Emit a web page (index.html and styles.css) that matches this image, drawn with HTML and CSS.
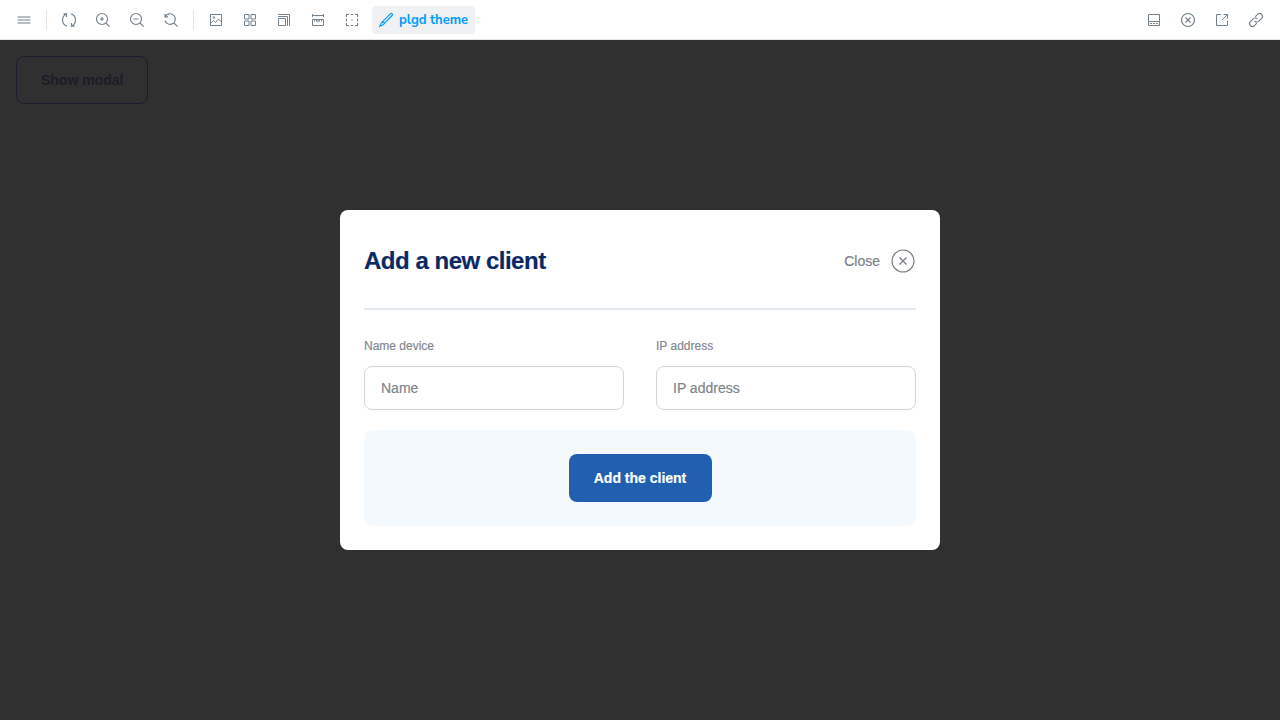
FILE: index.html
```
<!DOCTYPE html>
<html lang="en">
<head>
<meta charset="utf-8">
<title>plgd theme</title>
<link rel="stylesheet" href="styles.css">
</head>
<body>
<div class="app">
  <header class="toolbar">
    <div class="group">
      <button class="tool" aria-label="Menu"><svg viewBox="0 0 14 14"><path d="M.5 4h13M.5 7h13M.5 10h13"/></svg></button>
      <span class="separator"></span>
      <button class="tool" aria-label="Reload"><svg viewBox="0 0 14 14" class="bold"><path d="M1.500.9h3v3M4.300 1.100A6.500 6.500 0 0 0 4.800 13.100M12.500 13.100h-3v-3M9.700 12.900A6.500 6.500 0 0 0 9.200.9"/></svg></button>
      <button class="tool" aria-label="Zoom in"><svg viewBox="0 0 14 14" class="bold"><circle cx="6" cy="6" r="5.500"/><path d="M10 10l3.600 3.600M6 4v4M4 6h4"/></svg></button>
      <button class="tool" aria-label="Zoom out"><svg viewBox="0 0 14 14" class="bold"><circle cx="6" cy="6" r="5.500"/><path d="M10 10l3.600 3.600M3.500 6h5"/></svg></button>
      <button class="tool" aria-label="Reset zoom"><svg viewBox="0 0 14 14" class="bold"><path d="M1 1v2.900h3M1.300 3.600A5.300 5.300 0 1 1 1 7.800M10 10l3.600 3.600"/></svg></button>
      <span class="separator"></span>
      <button class="tool" aria-label="Background"><svg viewBox="0 0 14 14"><path d="M1.500 1.500h11v11h-11zM1.500 10.500l3-3 2 2 3-3.500 3 3"/><circle cx="5" cy="4.500" r=".8"/></svg></button>
      <button class="tool" aria-label="Grid"><svg viewBox="0 0 14 14"><path d="M1.500 1.500H6V6H1.500zM8 1.500h4.500V6H8zM1.500 8H6v4.500H1.500zM8 8h4.500v4.500H8z"/></svg></button>
      <button class="tool" aria-label="Viewport"><svg viewBox="0 0 14 14"><path d="M1.500 5.500h7v7h-7zM1 3.500h9.500V13M1 1.500h11.500V13"/></svg></button>
      <button class="tool" aria-label="Measure"><svg viewBox="0 0 14 14"><path d="M1.500 1v3M12.500 1v3M1.500 2.500h11M1.500 6.500h11v6h-11zM3.500 6.500v2M5.500 6.500v2M7 6.500v3M8.500 6.500v2M10.500 6.500v2"/></svg></button>
      <button class="tool" aria-label="Outline"><svg viewBox="0 0 14 14" class="bold"><path d="M1.500 4V1.500H4M5.500 1.500h3M10 1.500h2.500V4M12.500 5.500v3M12.500 10v2.500H10M8.500 12.500h-3M4 12.500H1.500V10M1.500 8.500v-3M6.200 7h1.600"/></svg></button>
      <button class="tool theme"><svg viewBox="0 0 14 14" class="bold"><path d="M13.200.8c-.5-.5-1.200-.4-1.700.1L3.700 8.400l1.900 1.900 7.500-7.800c.5-.5.6-1.200.1-1.700zM3.700 8.400L2.200 10.200.8 13.200l3-1.200 1.800-1.700"/></svg><span class="theme-name">plgd theme</span></button>
    </div>
    <div class="group">
      <button class="tool" aria-label="Addons"><svg viewBox="0 0 14 14"><path d="M1.500 1.500h11v11h-11zM1.500 8.500h11M3 10.500h2M6 10.500h2M9 10.500h2"/></svg></button>
      <button class="tool" aria-label="Hide"><svg viewBox="0 0 14 14" class="bold"><circle cx="7" cy="7" r="6.500"/><path d="M4.500 4.500l5 5M9.500 4.500l-5 5"/></svg></button>
      <button class="tool" aria-label="Open"><svg viewBox="0 0 14 14"><path d="M6 1.500H1.500v11h11V8M8.500 1.500h4v4M12.500 1.500L7 7"/></svg></button>
      <button class="tool" aria-label="Copy link"><svg viewBox="0 0 14 14" class="bold"><path d="M6.200 3.800l2.400-2.400a2.800 2.800 0 0 1 4 4L9.800 8.200a2.800 2.800 0 0 1-4.200-.4M7.800 10.200l-2.400 2.400a2.800 2.800 0 0 1-4-4l2.800-2.800a2.800 2.800 0 0 1 4.200.4"/></svg></button>
    </div>
  </header>
  <main class="canvas">
    <button class="show">Show modal</button>
    <div class="overlay">
      <section class="modal">
        <div class="modal-head">
          <h1 class="title">Add a new client</h1>
          <button class="close"><span class="close-text">Close</span><svg viewBox="0 0 24 24" class="bold"><circle cx="12" cy="12" r="11"/><path d="M8.500 8.500l7 7M15.500 8.500l-7 7" stroke-width="1.400"/></svg></button>
        </div>
        <div class="fields">
          <label class="field"><span class="label">Name device</span><input class="input" placeholder="Name"></label>
          <label class="field"><span class="label">IP address</span><input class="input" placeholder="IP address"></label>
        </div>
        <div class="modal-foot"><button class="primary">Add the client</button></div>
      </section>
    </div>
  </main>
</div>
</body>
</html>
```
FILE: styles.css
```
* { box-sizing: border-box; }
body { margin: 0; font-family: "Liberation Sans", Arial, sans-serif; }
button { margin: 0; padding: 0; border: 0; background: none; font: inherit; }
svg { display: block; fill: none; stroke: currentColor; flex: none; overflow: visible; }
.bold { stroke-width: 1.15; }
.app { height: 720px; display: flex; flex-direction: column; overflow: hidden; }
.toolbar { height: 40px; flex: none; display: flex; justify-content: space-between; padding: 0 10px; background: #fff; border-bottom: 1px solid #e3e5e7; }
.group { display: flex; align-items: center; gap: 6px; }
.tool { height: 28px; width: 28px; display: flex; align-items: center; justify-content: center; color: #73828c; border-radius: 4px; }
.tool svg { width: 14px; height: 14px; }
.separator { width: 1px; height: 20px; margin: 0 2px; background: #dfe4e8; }
.theme { width: 103px; gap: 6px; color: #029cfd; background: #eff1f3; }
.theme-name { width: 69px; font: 700 13px/14px "Nunito Sans", "Open Sans", sans-serif; white-space: nowrap; text-align: left; }
.canvas { position: relative; flex: 1; padding: 16px; background: #303030; }
.show { display: block; width: 132.4px; height: 48px; border: 1px solid #1b1d2a; border-radius: 8px; color: #1b1d28; font-weight: 700; font-size: 14px; }
.overlay { position: absolute; inset: 0; display: flex; align-items: center; justify-content: center; }
.modal { width: 600px; height: 340px; padding: 24px; border-radius: 8px; background: #fff; -webkit-text-stroke: 0.2px currentColor; }
.modal-head { height: 76px; display: flex; justify-content: space-between; padding-top: 9px; align-items: flex-start; border-bottom: 2px solid #e5eaef; }
.title { margin: 0; font-size: 24px; line-height: 36px; font-weight: 700; letter-spacing: -0.48px; color: #0a2866; }
.close { height: 36px; display: flex; align-items: center; gap: 11px; padding-right: 1px; color: #7b8087; font-size: 14px; }
.close svg { width: 24px; height: 24px; }
.fields { display: grid; grid-template-columns: 1fr 1fr; gap: 32px; margin-top: 28px; }
.field { display: flex; flex-direction: column; gap: 12px; }
.label { font-size: 12px; line-height: 16px; color: #83888e; }
.input { width: 100%; height: 44px; padding: 0 16px; border: 1px solid #d4d6d9; border-radius: 8px; background: #fff; font: 14px "Liberation Sans", Arial, sans-serif; }
.input::placeholder { color: #80858b; opacity: 1; }
.modal-foot { height: 96px; margin-top: 20px; display: flex; justify-content: center; align-items: center; border-radius: 8px; background: #f3f9fc; }
.primary { width: 143px; height: 48px; border-radius: 8px; background: #2160b0; color: #fff; font-weight: 700; font-size: 14px; }
```
